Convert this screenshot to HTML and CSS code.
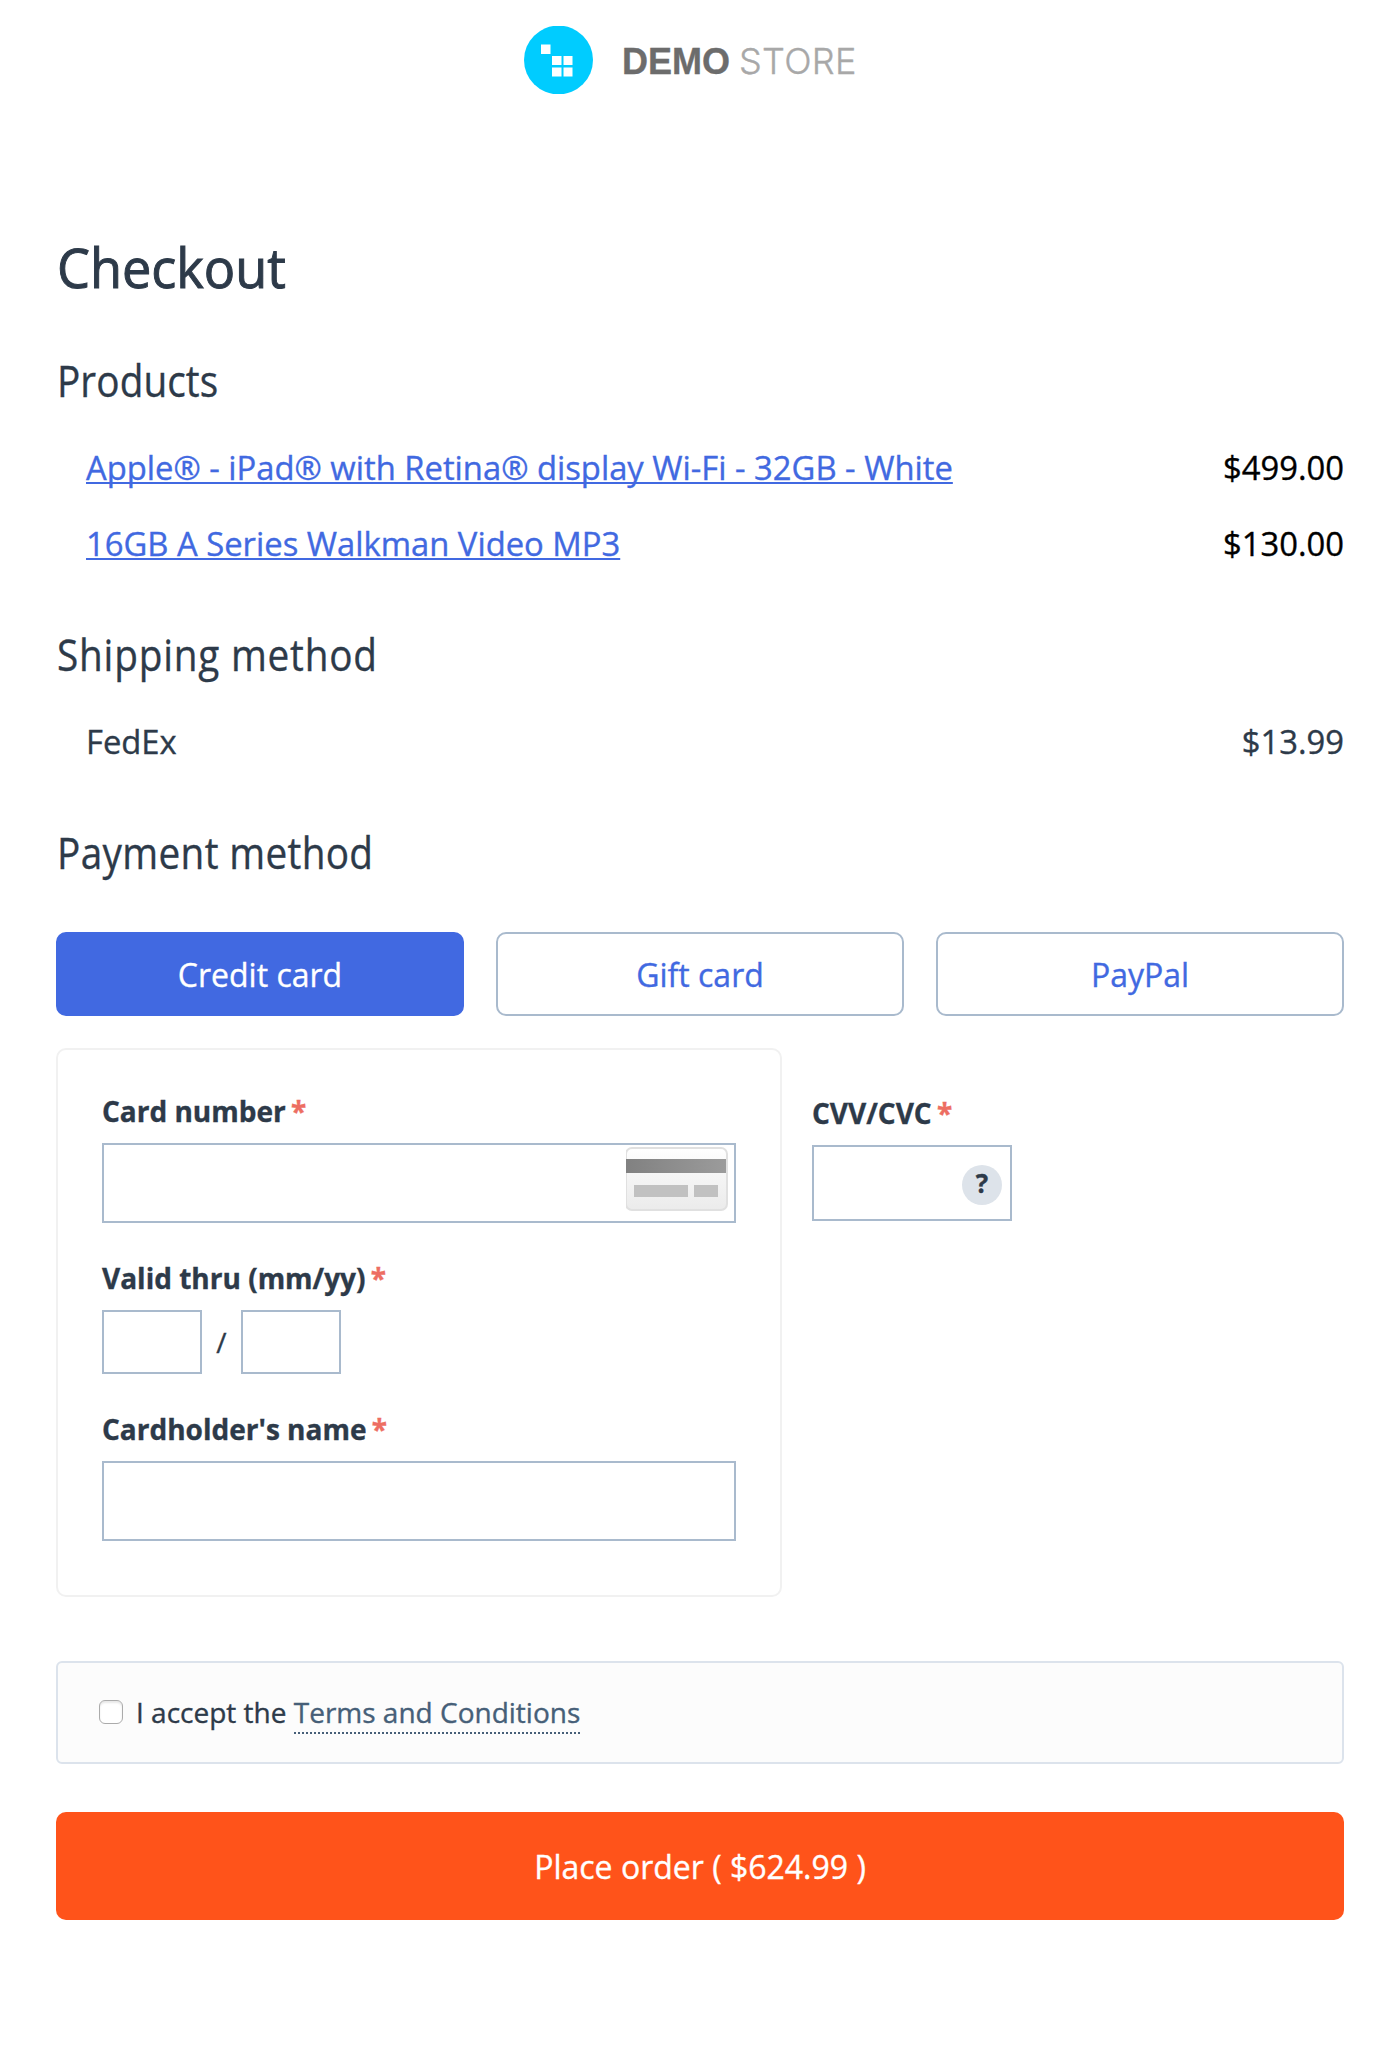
FILE: index.html
```html
<!DOCTYPE html>
<html lang="en">
<head>
<meta charset="utf-8">
<title>Checkout</title>
<link rel="stylesheet" href="styles.css">
</head>
<body>
<header class="logo">
  <svg class="logo-mark" width="69" height="68" viewBox="0 0 69 68">
    <ellipse cx="34.5" cy="34" rx="34.5" ry="34.4" fill="#00ccff"/>
    <path fill="#fff" d="M17 18.5h9.5v9.5H17zM28 30h9.500v9H28zM39.500 30h9v9h-9zM28 41.500h9.500v9H28zM39.500 41.500h9v9h-9z"/>
  </svg>
  <span class="logo-text"><b class="logo-demo">DEMO</b><span class="logo-store">STORE</span></span>
</header>
<main class="checkout">
  <h1 class="title"><span class="title-text">Checkout</span></h1>

  <section class="section">
    <h2 class="heading"><span class="heading-text">Products</span></h2>
    <div class="row product"><a class="link" href="#">Apple® - iPad® with Retina® display Wi-Fi - 32GB - White</a><span>$499.00</span></div>
    <div class="row product"><a class="link" href="#">16GB A Series Walkman Video MP3</a><span>$130.00</span></div>
  </section>

  <section class="section shipping">
    <h2 class="heading"><span class="heading-text">Shipping method</span></h2>
    <div class="row"><span>FedEx</span><span>$13.99</span></div>
  </section>

  <section class="payment">
    <h2 class="heading"><span class="heading-text">Payment method</span></h2>
    <div class="tabs">
      <button class="tab active">Credit card</button>
      <button class="tab">Gift card</button>
      <button class="tab">PayPal</button>
    </div>
    <div class="fields">
      <div class="card">
        <div class="field">
          <label class="label">Card number <span class="req">*</span></label>
          <div class="input input-card">
            <svg width="102" height="64" viewBox="0 0 102 64">
              <defs>
                <linearGradient id="face" x1="0" y1="0" x2="0" y2="1"><stop offset="0" stop-color="#fff"/><stop offset=".45" stop-color="#f5f5f5"/><stop offset="1" stop-color="#ebebeb"/></linearGradient>
                <linearGradient id="stripe"><stop offset="0" stop-color="#818181"/><stop offset="1" stop-color="#9b9b9b"/></linearGradient>
              </defs>
              <rect x="0" y="1" width="101" height="62" rx="6" fill="url(#face)" stroke="#e0e0e0" stroke-width="2"/>
              <path fill="url(#stripe)" d="M0 12h100v14H0z"/>
              <path fill="#c1c1c1" d="M8 38h54v12H8zM68 38h24v12H68z"/>
            </svg>
          </div>
        </div>
        <div class="field">
          <label class="label">Valid thru (mm/yy) <span class="req">*</span></label>
          <div class="dates"><div class="input input-date"></div><span class="slash">/</span><div class="input input-date"></div></div>
        </div>
        <div class="field">
          <label class="label">Cardholder's name <span class="req">*</span></label>
          <div class="input"></div>
        </div>
      </div>
      <div class="cvv">
        <label class="label">CVV/CVC <span class="req">*</span></label>
        <div class="input input-cvv"><span class="help">?</span></div>
      </div>
    </div>
  </section>

  <div class="terms">
    <span class="checkbox"></span>
    <span class="terms-text">I accept the <a class="terms-link" href="#">Terms and Conditions</a></span>
  </div>
  <button class="submit">Place order ( $624.99 )</button>
</main>
</body>
</html>
```
FILE: styles.css
```css
* { box-sizing: border-box; }
body {
  margin: 0;
  background: #fff;
  color: #2d3a49;
  font: 32.770px/46px "Open Sans", "Noto Sans", sans-serif;
  -webkit-text-stroke: .35px currentColor;
}
button { font: inherit; font-size: 32px; padding: 2px 0 0; -webkit-text-stroke: .35px currentColor; }
.logo {
  display: flex;
  align-items: center;
  height: 94px;
  padding: 26px 0 0 524px;
}
.logo-text {
  display: flex;
  align-items: baseline;
  margin: 2px 0 0 29px;
  font: 36px/40px "Liberation Sans", Arial, sans-serif;
}
.logo-demo { color: #6c6c6c; width: 117px; }
.logo-store { color: #a8a8a8; font-family: Inter, sans-serif; font-weight: 300; letter-spacing: .3px; }

.checkout { padding: 143px 56px 0; }
.title {
  margin: 0 0 58px;
  font-size: 55px;
  line-height: 60px;
  font-weight: 400;
}
.title-text, .heading-text {
  display: inline-block;
  margin-left: 1px;
  transform: scaleX(.9);
  transform-origin: 0 50%;
}
.title-text { transform: scaleX(.95); -webkit-text-stroke: 1px #2d3a49; }
.section { margin-bottom: 62px; }
.heading {
  margin: 0 0 38px;
  font-size: 43px;
  line-height: 52px;
  font-weight: 400;
  letter-spacing: .1px;
}
.shipping .heading { letter-spacing: .9px; }
.row {
  display: flex;
  justify-content: space-between;
  padding-left: 30px;
}
.product { color: #000; }
.product + .product { margin-top: 30px; }
.link {
  color: #4169e1;
  text-decoration: underline;
  text-decoration-thickness: 2px;
  text-underline-offset: 2px;
  text-decoration-skip-ink: none;
}

.payment .heading { margin-bottom: 53px; letter-spacing: .4px; }
.tabs { display: grid; grid-template-columns: repeat(3, 1fr); gap: 32px; }
.tab {
  height: 84px;
  border: 2px solid #a9bacd;
  border-radius: 10px;
  background: #fff;
  color: #4169e1;
}
.tab.active { background: #4169e1; border-color: #4169e1; color: #fff; }

.fields { display: flex; align-items: flex-start; gap: 30px; margin-top: 32px; }
.card {
  width: 726px;
  padding: 42px 44px 54px;
  border: 2px solid #f1f1f1;
  border-radius: 10px;
}
.field + .field { margin-top: 36px; }
.label {
  display: block;
  margin-bottom: 13px;
  font-size: 28px;
  line-height: 38px;
  font-weight: 700;
}
.req { margin-left: -2px; color: #ed6e62; }
.input { height: 80px; border: 2px solid #a9bacd; background: #fff; }
.input-card { display: flex; justify-content: flex-end; padding: 2px 6px; }
.dates { display: flex; }
.input-date { width: 100px; height: 64px; }
.slash { width: 39px; text-align: center; font-size: 28px; line-height: 64px; }
.cvv { padding-top: 46px; }
.input-cvv {
  display: flex;
  align-items: center;
  justify-content: flex-end;
  width: 200px;
  height: 76px;
  padding: 3px 8px 0 0;
}
.help {
  width: 40px;
  height: 40px;
  border-radius: 50%;
  background: #dde3ea;
  font-size: 26px;
  line-height: 37px;
  font-weight: 700;
  text-align: center;
}

.terms {
  display: flex;
  align-items: center;
  height: 103px;
  margin-top: 64px;
  padding: 0 41px 2px;
  border: 2px solid #dce3ec;
  border-radius: 6px;
  background: #fcfcfc;
}
.checkbox {
  width: 24px;
  height: 24px;
  margin-right: 13px;
  border: 1.500px solid #ababab;
  border-radius: 6px;
  background: #fff;
  box-shadow: inset 0 2px 2px #e8e8e8;
}
.terms-text { font-size: 28px; line-height: 38px; }
.terms-link { color: #465f78; text-decoration: none; border-bottom: 2px dotted #465f78; padding-bottom: 1px; }
.submit {
  display: block;
  width: 100%;
  height: 108px;
  margin-top: 48px;
  border: 0;
  border-radius: 10px;
  background: #ff531a;
  color: #fff;
}
```
